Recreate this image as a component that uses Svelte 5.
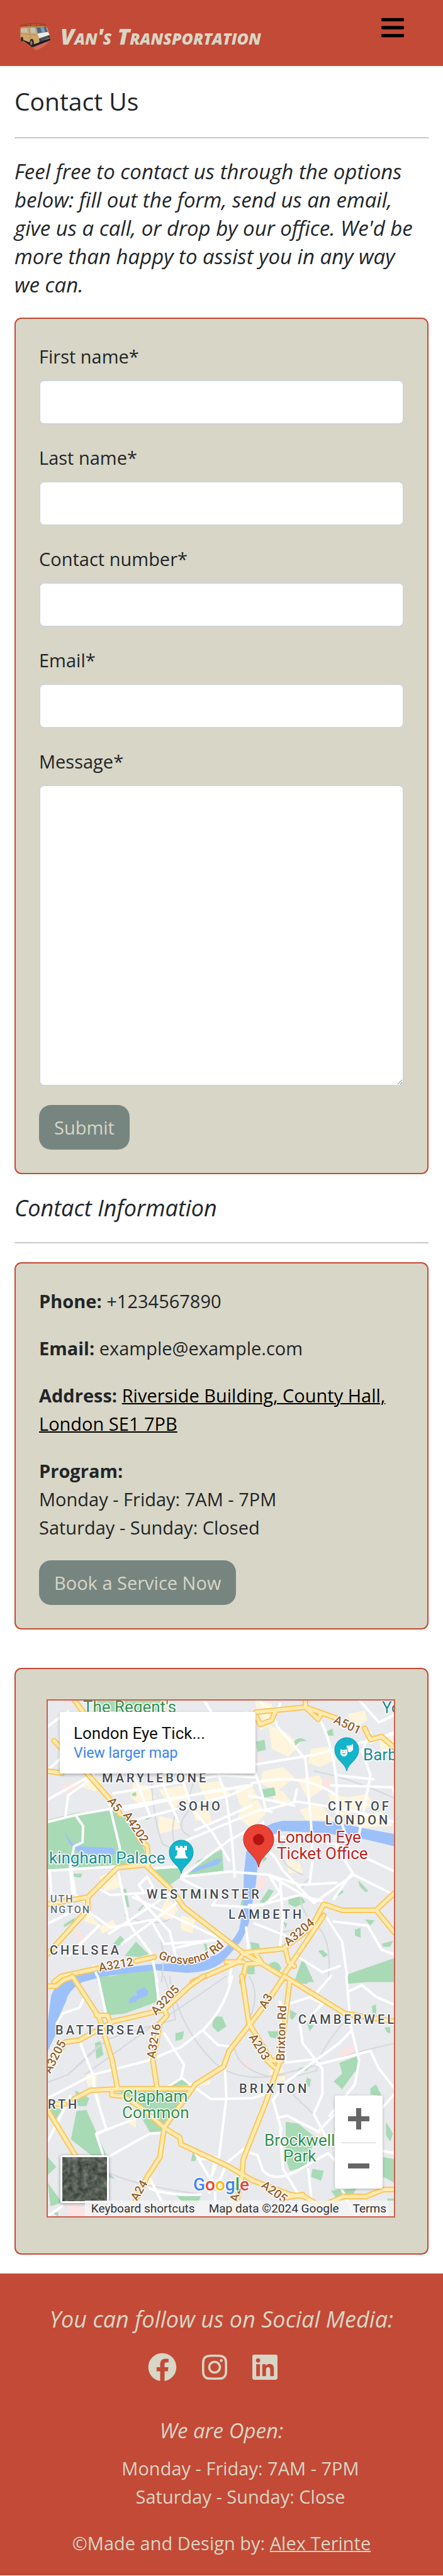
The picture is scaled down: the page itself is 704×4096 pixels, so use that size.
<script>
  const fields = [
    { id: 'first-name', label: 'First name*', type: 'text' },
    { id: 'last-name', label: 'Last name*', type: 'text' },
    { id: 'phone', label: 'Contact number*', type: 'tel' },
    { id: 'email', label: 'Email*', type: 'email' }
  ];

  const socials = [
    {
      name: 'Facebook',
      box: '0 0 512 512',
      width: 46,
      path: 'M504 256C504 119 393 8 256 8S8 119 8 256c0 123.78 90.69 226.38 209.25 245V327.69h-63V256h63v-54.64c0-62.15 37-96.48 93.67-96.48 27.14 0 55.52 4.84 55.52 4.84v61h-31.28c-30.8 0-40.41 19.12-40.41 38.73V256h68.78l-11 71.69h-57.78V501C413.31 482.38 504 379.78 504 256z'
    },
    {
      name: 'Instagram',
      box: '0 0 448 512',
      width: 40,
      path: 'M224.1 141c-63.6 0-114.9 51.3-114.9 114.9s51.3 114.9 114.9 114.9S339 319.5 339 255.9 287.7 141 224.1 141zm0 189.6c-41.1 0-74.7-33.5-74.7-74.7s33.5-74.7 74.7-74.7 74.7 33.5 74.7 74.7-33.6 74.7-74.7 74.7zm146.4-194.3c0 14.9-12 26.8-26.8 26.8-14.9 0-26.8-12-26.8-26.8s12-26.8 26.8-26.8 26.8 12 26.8 26.8zm76.1 27.2c-1.7-35.9-9.9-67.7-36.2-93.9-26.2-26.2-58-34.4-93.9-36.2-37-2.1-147.9-2.1-184.9 0-35.8 1.7-67.6 9.9-93.9 36.1s-34.4 58-36.2 93.9c-2.1 37-2.1 147.9 0 184.9 1.7 35.9 9.9 67.7 36.2 93.9s58 34.4 93.9 36.2c37 2.1 147.9 2.1 184.9 0 35.9-1.7 67.7-9.9 93.9-36.2 26.2-26.2 34.4-58 36.2-93.9 2.1-37 2.1-147.8 0-184.8zM398.8 388c-7.8 19.6-22.9 34.7-42.6 42.6-29.5 11.7-99.5 9-132.1 9s-102.7 2.6-132.1-9c-19.6-7.8-34.7-22.9-42.6-42.6-11.7-29.5-9-99.5-9-132.1s-2.6-102.7 9-132.1c7.8-19.6 22.9-34.7 42.6-42.6 29.5-11.7 99.5-9 132.1-9s102.7-2.6 132.1 9c19.6 7.8 34.7 22.9 42.6 42.6 11.7 29.5 9 99.5 9 132.1s2.7 102.7-9 132.1z'
    },
    {
      name: 'LinkedIn',
      box: '0 0 448 512',
      width: 40,
      path: 'M416 32H31.9C14.3 32 0 46.5 0 64.3v383.4C0 465.5 14.3 480 31.9 480H416c17.6 0 32-14.5 32-32.3V64.3c0-17.8-14.4-32.3-32-32.3zM135.4 416H69V202.2h66.5V416zm-33.2-243c-21.3 0-38.5-17.3-38.5-38.5S80.9 96 102.2 96c21.2 0 38.5 17.3 38.5 38.5 0 21.3-17.2 38.5-38.5 38.5zm282.1 243h-66.4V312c0-24.8-.5-56.7-34.5-56.7-34.6 0-39.9 27-39.9 54.9V416h-66.4V202.2h63.7v29.2h.9c8.9-16.8 30.6-34.5 62.2-34.5 66.5 0 79.8 43.7 79.8 94V416z'
    }
  ];

  // The map is drawn as two tiles, north and south, each with its own grid.
  const tiles = [
    {
      matrix: 'matrix(.449 0 0 .323 -75.5 -59)',
      blocks:
        'M900 170l60 30 20 90-60 40zM950 300l60 40 50 60-40 60-60-40zM1100 420l60-10 30 60-60 40-40-20zM1230 250l60-20 10 50-50 40zM300 560l60 20-20 50-50-20zM470 590l50 10 30 60-50 40-40-40zM560 620l90-20 20 60-60 60zM700 590l80-10 40 70-90 30zM830 620l60-20 20 60-60 40zM860 690l50-20 30 70-50 70-50-50zM680 700l60 30 10 60-60-20zM560 750l60 20 20 40-80 30zM930 530l70-20 40 50-60 70-60-40zM1050 570l80-20 20 60-60 60zM1160 640l70 20 70-20 20 60-130 60zM1060 720l70-30 50 80-100 0zM1240 760l110-30 40 70-120 10zM1340 380l50-20v70l-40 10zM960 620l40 10 30 50-60 10zM350 1050l50-30 30 80-60 20zM590 1150l40 60-30 60-40-30zM270 1200l50 40 40 60-60-30zM600 890l40-20-10 60zM640 1240l50 20-10 70-40-20zM1010 960l50 20 10 50-50 0zM350 1300l50-40 10 40-50 30z',
      pink: 'M230 590l60-10-40 60-40-10zM1145 560l25 10 0 60-35-20zM910 1045l35 15-15 55-25-10zM265 1310l20 10 20 60-20-10-20-40zM905 460l25 0-5 40zM210 180l60 0-20 30z',
      parks:
        'M168 770L270 735 395 720 440 745 500 880 525 990 400 1000 168 1015zM330 180L570 180 555 235 330 235zM905 385l30-10 5 50-30 10zM925 620l45-10 5 40-40 10zM1040 385q15-30 45-5l-25 5-15 20zM1155 335l20-15 5 35-20 0zM465 640l15-8 2 20-14 2zM510 755l20-12 8 12-20 16zM660 1045L700 970 785 915 790 1020 670 1045zM545 1010L640 1005 640 1050 590 1100zM255 1035l35 0-5 20-25-5zM435 1110l10 0 12 90-12 0zM510 1190l-20 30-2-8 30-42zM950 1110l18 10-30 60-20-5zM1020 1155l40-20 20 40-35 25-25-15zM1268 1070l35 50-10 5-22-30zM1190 1130l20-15 5 10-20 20zM400 1380l25-40 20 30-35 25zM440 1440L480 1370 525 1430 490 1445zM225 1285l40-35-5 20-35 30zM1290 1260l35 5-15 25zM1255 1310l20-10 0 50-20-10zM1350 1380l40-15-10 30-25 0zM1125 1415l15-5 20 25-15 12zM885 1370l30 10 5 30-30 10zM340 1568L350 1555 545 1490 550 1568zM1040 1568L1070 1450 1110 1568zM950 1480q30-30 45 20l-10 20zM1225 1568L1230 1530 1395 1450V1568zM720 1380l10 0 5 40-8 0zM870 1490l30-10 0 50-25 0zM1000 1270l15 10-5 25zM855 1160l35 0-5 35-35 0zM925 940l20 20-15 20z',
      water:
        'M1395 840L1300 815 1180 780 1080 775 1000 775Q930 790 895 860L870 930 862 1040 860 1200 845 1310Q820 1380 770 1430 690 1475 550 1480L350 1510 180 1568H260L370 1540 480 1520 550 1510 660 1523Q760 1520 800 1450L850 1370Q885 1290 890 1200L905 1080 915 930Q930 850 1000 825L1150 835 1290 865 1395 900zM230 795q-5 70 45 105l125 8 10 30-60 12-80-28q-45-50-40-127zM680 1015l90-55 15 5-15 25-60 25-30 15z',
      rail: 'M535 590q10 200 40 300l90 60M740 460q-80 130-70 260-60 90 0 130M440 1240q90 60 160 20M550 1300q40 100 20 268M1090 1060q-60 90 10 210 80 60 60 298M900 1280q90 70 160 20M1010 860q-50 120 60 180M1110 530q120 30 280 130M630 700q-40 130 0 230',
      streets:
        'M168 310L240 235M168 525l190-240M168 670L330 545M230 760L240 650 330 560M168 780L270 745 500 690 890 600M268 750l25 50-2 80-30 20-15 110 10 120 60 60M380 660l45 260M470 540l60 210M560 540l70 240M640 550l40 170 70 110 60 140M770 540l30 120 20 210 10 180M400 640l380-90 120 10M440 720l300-90 140-30M450 780l360-130 80-50M660 870l260-150 40 10M690 820l200-120M640 1050l170-180 110-80M520 1010l120-10M640 1050l170-25 140 15 110 50 130-10M870 240q40 160 20 250l30 120 20 110 110-40 180 40 165 60M960 230l20 80 100 160 20 320 5 180-10 110M1130 270q70 200 60 450l40 150M1310 340l-30 90 30 120-40 290M890 500l220-50 280-100M890 590q180-60 300 60M1170 600l220 10 5 30M1050 620l-10 60M880 650l160 50M910 180l50 50M720 180l25 55M168 1020l350-30M175 1020l5 110M250 1000l15 130M415 1010l40 270 80 150 20 138M350 1110l40 30 120-10M480 1140l120 180 20 120M470 1150l300 200M520 1050l-30 40 20 40 30-30-20-50M168 1280l120-80M310 1220l80 80 160-40M385 1330l240-220M430 1380l110-110 100-110M540 1280l40 100 220-20M620 1400l130-40M640 1060l130 90-20 40 130 10M950 1040l40 90-60 60-50 0M950 1040l160 130M1250 1040l-140 140-60-90-50-70-30-70-50-60M1190 900l60 140 145 100M1240 1040l-60 120M890 1200l170-60 80 30M900 1280l110 60M870 1300l10 130M1150 1240l60 130 20 198M1180 1270l120 20 50 120 40 20M1060 1450l80 70 60-30M820 1470l-10 98M990 1060l10 190-10 150M330 1490l20 78M240 1440l110-150M930 780l-10 60 270 50 200 130M1190 550l130 20M1390 340l-80 50M1270 180l70 110 60-40M900 250l160-40M960 280l30-80',
      roads:
        'M262 180L320 290M168 530l50 10M190 380l20 30M300 530L395 680 425 745M490 860L520 900 525 990 415 1005 310 1150 168 1185M310 1150v60L168 1430M520 1000L610 1120 650 1200 860 1425 1000 1405 1100 1300 1145 1185 1210 1215 1330 1215 1395 1130M1330 1215l65 110M1145 1240L1000 1540M860 1425L940 1490 1010 1550M905 1430L925 1475 870 1480 855 1568M860 1430L840 1470 680 1568M1010 1410l10 60 20 20M860 1470L800 1470M480 1465L545 1445M350 1500L215 1540 190 1568M255 1540l10 28M905 240L1080 215 1190 270M1080 180v35l45 60 10-30M905 260l15 40 40-20 15-50M1290 320l20 55 40-15 45 55'
    },
    {
      matrix: 'matrix(.449 0 0 .3127 -75.5 438.3)',
      blocks: 'M300 500l40-10 0 60-30 10zM325 560l15 0 15 100-10 0zM950 480l50-10 10 60-40 10zM450 700l30 20 0 50-25-20zM520 1020l25 40-25 20zM690 540l60-10-10 20-40 10zM1110 790l25-10 0 30z',
      pink: 'M1200 390l50-50 5 60-50 30zM860 420l15 10 15 45-18-2zM240 1160l40-10 30 70h-70z',
      parks:
        'M340 0L550 0 555 130 440 190 375 200zM1225 0H1395V15L1225 40zM1060 10l45-10-20 40-30-5zM755 205l30 0 15 50-30 30-20-30zM620 290l30-10-5 40-25 10zM335 340l20-10 10 70-25 20zM1025 170l25 20-15 30-10-5zM945 280l40 0 0 40-30-10zM1085 240l25 10-15 30zM1315 150l15-5 0 60-12-10zM1360 260l20 0 0 30-12-5zM1200 440l65-35 5 50-60 120-30-40 30-40zM1055 470l50-20-20 30-30 0zM1085 515l15 10-5 40-15-20zM1310 570l20-20 20 60-40-10zM415 585l250 0-30 90-60 120-45 0-70-180zM590 560l55-40 20 35zM270 685l35-5 70 230-45 10-80-90zM265 580l50 40-10 40-30 0zM168 650l50 30-30 70-20-40zM1010 740l45 10 60 70-35 150-55 20-15-60zM1105 980l40 10-10 50-35-20zM1355 920l40 10v120l-40-30zM1365 740l25 60-10 40-15-30zM620 1110l95-5-20 60-50-15zM168 920l30 50-30 40zM168 1050l50 100-40 20zM680 900l20-10-10 50-15 0zM370 980l35 50-30-10zM185 1200l20 0 0 25zM1170 1090l90-10-20 50-50 0zM1370 1130l25 0v95h-20z',
      water: 'M240 0L370 0 290 30Q240 70 232 130L210 200 195 300 168 380V230L180 100Q195 40 240 0zM455 120l15-20 15 0-5-25 30-20 15 25-5 20-30 15-10 15-25 8z',
      rail: 'M580 0q30 120 40 220L490 270 380 320 240 500 168 540M800 0Q640 160 560 230L300 500M600 0q0 60 25 140 40 160 120 280 80 130 260 80M880 0q60 130-50 330-10 130 120 180l130-40 200-90 120-40M1250 180q-130 200-130 300l-80 30M385 1000q80 60 330 110M1035 600l80 110M240 500l110-150',
      streets:
        'M345 0l35 230M550 0l10 120M300 100l-20 60-60 30-20 50M280 330l45 160 10 100 40 190M168 620L330 500 520 430 640 360 720 270Q800 150 820 0M580 290l70 160-10 70-45 40M640 515l105 110 150-5 60-30M720 280l50 70 60 10M795 460l5 160-25 290-30 120M340 800l200-110M375 780l-35 25 30 130M380 920l150-120 50-5M1225 0l15 250 30 180-15 120-90 160M1060 240l10 100 70 130 0 130-30 100 50 140M1005 550l-40 80 30 150M1010 540l190-200 40-60M1000 150l110-50 60-100M990 130l20 310 110-20M1100 110l40 30-40 60M1230 80l50-35 50 60 65 40M1120 450l190-70 30 90 55 100M980 720l35-10 110 80 60-90M990 780l10 200 60 140M870 890l40 20 20 80q40 60 120 0l110-90 40 60M700 930l40 0M690 900l60 150 30-20 20-80 60-70M760 920l-20 180M530 1030l50 140M530 1080q80 40 180 30M760 1100v120M168 840l80-230M168 1220l50-50M1090 980l10 140M1200 1060l60 170M1395 600l-50 80M1395 900l-150-40',
      roads:
        'M255 0L350 210 395 420 415 570M168 50h30l25-30 30-15M340 200h40l10 40M168 470L230 335 280 325 400 230 580 170 670 50 720 0M580 170l10 30-25 40-25 190 15 140M260 625L320 580 430 572 670 572M395 580v25l40 5 65 60 80 100 55 50 5 35 165 110 90 75 130 70 50 10 60 50 80-50h80l60-35 40 0M1005 0L945 130 810 380 790 460 690 550 580 770 565 920 520 1020 450 1225M855 0L880 240 960 430h35M1005 0L1220 190 1395 230M1025 20L990 430 940 640 860 930 855 1020 825 1225M945 430l35 45M168 680L265 910M168 650l60 0M1000 1130l70-20'
    }
  ];

  const districts = [
    ['MARYLEBONE', 86, 130], ['SOHO', 208, 175], ['CITY OF', 445, 175], ['LONDON', 441, 197],
    ['WESTMINSTER', 157, 315], ['LAMBETH', 287, 347], ['CHELSEA', 3, 404], ['BATTERSEA', 12, 531],
    ['CAMBERWEL', 398, 514], ['BRIXTON', 304, 624], ['RTH', 0, 649]
  ];

  const roadNames = [
    ['A501', 453, 35, 25], ['A5', 94, 160, 52], ['A4202', 119, 182, 56], ['A3212', 82, 431, -10],
    ['A3204', 382, 391, -40], ['A3205', 172, 501, -47], ['A3', 346, 491, -60], ['Brixton Rd', 376, 573, -88],
    ['A3216', 170, 570, -80], ['A203', 319, 535, 58], ['A3205', 4, 594, -63], ['A24', 142, 797, -60],
    ['A205', 338, 773, 36], ['A2', 302, 798, -78]
  ];
</script>

{#snippet pin(x, y)}
  <g transform="translate({x} {y})">
    <path d="M0 0C-2-13-19-17-19-34a19 19 0 0 1 38 0C19-17 2-13 0 0z" fill="#12b5cb" stroke="#0e98ab" />
  </g>
{/snippet}

<header>
  <a class="brand" href="#home">
    <svg class="van" viewBox="95 112 165 145" aria-hidden="true">
      <path d="M98 200l85 57q45-14 75-55l-60 20z" fill="#d4766a" opacity=".7" />
      <path d="M103 198l62 44 90-36 0-8-80 26z" fill="#241c1e" />
      <path d="M103 140l55-8 52 2q25 0 32 7l13 47-2 14-80 23-70-27z" fill="#cda66b" />
      <path d="M103 138l75-9 60 5-58 9z" fill="#b08d45" />
      <path d="M104 137V127l78-10 49 8v10M104 129l80 3 47-7M130 124v12M155 121v13M184 118v18M208 122v10" fill="none" stroke="#7b3b33" stroke-width="2" />
      <path d="M105 148l15-3v21l-15-1zM123 145l14-2 1 23-15 0zM155 141l22-1 5 28-27-1z" fill="#bfc5bf" />
      <path d="M185 141l50-4 9 26-52 8z" fill="#4d6785" />
      <path d="M205 139l18-1 7 26-16 2z" fill="#7f9cb8" />
      <path d="M191 171l53-8 9 16-53 17z" fill="#ebebe6" />
      <path d="M199 197l53-18 3 13-53 22z" fill="#29333f" />
      <path d="M205 199l42-13M206 206l42-14" stroke="#8f9aa0" stroke-width="2" />
      <path d="M197 215l59-20 0 8-58 18z" fill="#171b24" />
      <path d="M150 144l4 58M104 170l80 9" stroke="#a8804b" stroke-width="2" />
      <ellipse cx="161" cy="219" rx="11" ry="21" fill="#2d2723" />
      <ellipse cx="159" cy="219" rx="5" ry="11" fill="#8e7c61" />
      <ellipse cx="111" cy="200" rx="6" ry="12" fill="#2d2723" />
    </svg>
    <span>Van's Transportation</span>
  </a>
  <button class="menu" type="button" aria-label="Open menu">
    <svg viewBox="0 0 34 30" aria-hidden="true">
      <path d="M2 3H32M2 15H32M2 27H32" stroke="#000" stroke-width="5" stroke-linecap="round" />
    </svg>
  </button>
</header>

<main>
  <h1>Contact Us</h1>
  <hr />
  <p class="intro">Feel free to contact us through the options below: fill out the form, send us an email, give us a call, or drop by our office. We'd be more than happy to assist you in any way we can.</p>

  <form class="card">
    {#each fields as field}
      <div class="field">
        <label for={field.id}>{field.label}</label>
        <input id={field.id} type={field.type} />
      </div>
    {/each}
    <div class="field">
      <label for="message">Message*</label>
      <textarea id="message"></textarea>
    </div>
    <button class="action" type="button">Submit</button>
  </form>

  <h2>Contact Information</h2>
  <hr />

  <section class="card">
    <p><strong>Phone:</strong> +1234567890</p>
    <p><strong>Email:</strong> example@example.com</p>
    <p><strong>Address:</strong> <a href="#map">Riverside Building, County Hall, London SE1 7PB</a></p>
    <p><strong>Program:</strong><br />Monday - Friday: 7AM - 7PM<br />Saturday - Sunday: Closed</p>
    <a class="action" href="#book">Book a Service Now</a>
  </section>

  <section class="card map-card" id="map">
    <div class="map">
      <svg class="chart" viewBox="0 0 550 820" role="img" aria-label="Map of central London">
        <rect width="550" height="820" fill="#e8eaed" />
        {#each tiles as tile}
          <g transform={tile.matrix} class="tile">
            <path d={tile.blocks} fill="#fef5dc" />
            <path d={tile.pink} fill="#fce4e3" />
            <path d={tile.parks} fill="#a8dab5" />
            <path d={tile.water} fill="#9cc0f9" />
            <path d={tile.rail} class="rail" />
            <path d={tile.streets} class="street" />
            <path d={tile.roads} class="road-edge" />
            <path d={tile.roads} class="road" />
          </g>
        {/each}

        <g class="road-name">
          {#each roadNames as [name, x, y, angle]}
            <text transform="translate({x} {y}) rotate({angle})">{name}</text>
          {/each}
          <path id="embankment" d="M175 410Q240 437 286 384" fill="none" stroke="none" />
          <text><textPath href="#embankment">Grosvenor Rd</textPath></text>
        </g>
        <g class="district">
          {#each districts as [name, x, y]}
            <text {x} {y}>{name}</text>
          {/each}
        </g>
        <g class="district minor">
          <text x="4" y="321">UTH</text>
          <text x="4" y="338">NGTON</text>
        </g>
        <g class="place park">
          <text x="56" y="19">The Regent's</text>
          <text x="119" y="638">Clapham</text>
          <text x="118" y="664">Common</text>
          <text x="344" y="708">Brockwell</text>
          <text x="374" y="733">Park</text>
        </g>
        <g class="place sight">
          <text x="2" y="259">kingham Palace</text>
          <text x="501" y="95">Barb</text>
          <text x="531" y="20">Yo</text>
        </g>
        <g class="place chosen">
          <text x="364" y="226">London Eye</text>
          <text x="364" y="252">Ticket Office</text>
        </g>

        {@render pin(212, 275)}
        <path d="M203 231h4v3h3v-3h4v3h3v-3h4v7h-3l1 8 3 3v2h-20v-2l3-3 1-8h-3z" fill="#fff" />
        {@render pin(475, 112)}
        <path d="M465 77q5 3 11 0v8q-5 8-11 0z" fill="#fff" />
        <path d="M475 71q5 2 10-2v9q-4 6-8 3l0-5-2 0z" fill="#fff" />
        <path d="M468 81h2M472 81h2M468 85q3-2 5 0M479 73h1M482 72h1" stroke="#12b5cb" />
        <path d="M335 265C333 247 311 240 311 221a24 24 0 0 1 48 0C359 240 337 247 335 265z" fill="#ea4335" stroke="#c5221f" />
        <circle cx="335" cy="221" r="9" fill="#b31412" />

        <text class="google" x="231" y="779"><tspan fill="#4285f4">G</tspan><tspan fill="#ea4335">o</tspan><tspan fill="#fbbc04">o</tspan><tspan fill="#4285f4">g</tspan><tspan fill="#34a853">l</tspan><tspan fill="#ea4335">e</tspan></text>
      </svg>

      <div class="place-card">
        <div>London Eye Tick...</div>
        <a href="#larger">View larger map</a>
      </div>

      <div class="zoom">
        <button type="button" aria-label="Zoom in">
          <svg viewBox="0 0 36 36" aria-hidden="true"><path d="M1 18H35M18 1V35" stroke="#666" stroke-width="8" /></svg>
        </button>
        <button type="button" aria-label="Zoom out">
          <svg viewBox="0 0 36 36" aria-hidden="true"><path d="M1 18H35" stroke="#666" stroke-width="8" /></svg>
        </button>
      </div>

      <button class="satellite" type="button" aria-label="Satellite view">
        <svg viewBox="0 0 72 72" aria-hidden="true">
          <filter id="terrain" x="0" y="0" width="100%" height="100%" color-interpolation-filters="sRGB">
            <feTurbulence type="fractalNoise" baseFrequency=".12" numOctaves="4" seed="6" />
            <feColorMatrix values=".4 0 0 0 .13  .4 0 0 0 .16  .4 0 0 0 .13  0 0 0 0 1" />
          </filter>
          <rect width="72" height="72" filter="url(#terrain)" />
        </svg>
      </button>

      <div class="legal">
        <span>Keyboard shortcuts</span>
        <span>Map data ©2024 Google</span>
        <span>Terms</span>
      </div>
    </div>
  </section>
</main>

<footer>
  <h3>You can follow us on Social Media:</h3>
  <ul class="socials">
    {#each socials as item}
      <li>
        <a href="#{item.name}" aria-label={item.name}>
          <svg viewBox={item.box} width={item.width} height="46" aria-hidden="true"><path d={item.path} fill="currentColor" /></svg>
        </a>
      </li>
    {/each}
  </ul>
  <h4>We are Open:</h4>
  <ul class="hours">
    <li>Monday - Friday: 7AM - 7PM</li>
    <li>Saturday - Sunday: Close</li>
  </ul>
  <p>©Made and Design by: <a href="#author">Alex Terinte</a></p>
</footer>

<style>
  :global(body) {
    margin: 0;
    background: #fff;
    color: #212529;
    font-family: "Open Sans", "Noto Sans", sans-serif;
    font-size: 29px;
    line-height: 45px;
  }

  :global(*) {
    box-sizing: border-box;
  }

  h1, h2, h3, h4, p, ul {
    margin: 0;
    padding: 0;
    font-weight: 400;
  }

  ul {
    list-style: none;
  }

  header {
    display: flex;
    justify-content: space-between;
    align-items: flex-start;
    height: 105px;
    padding: 28px 62px 0 30px;
    background: #c34a36;
  }

  .brand {
    display: flex;
    align-items: center;
    gap: 15px;
    margin-top: 7px;
    color: #d8d6c6;
    font-size: 36px;
    font-style: italic;
    font-variant: small-caps;
    font-weight: 800;
    text-decoration: none;
    white-space: nowrap;
  }

  .van {
    width: 51px;
    height: 45px;
  }

  .menu {
    padding: 0;
    border: 0;
    background: none;
  }

  .menu svg {
    display: block;
    width: 36px;
    height: 32px;
  }

  main {
    padding: 29px 23px 30px;
  }

  h1 {
    font-size: 39px;
    line-height: 54px;
  }

  hr {
    height: 2px;
    margin: 30px 0;
    border: 0;
    background: #c8c9ca;
  }

  .intro {
    margin-bottom: 30px;
    padding-right: 12px;
    font-size: 33px;
    font-style: italic;
  }

  .card {
    padding: 37px;
    border: 2px solid #c34a36;
    border-radius: 11px;
    background: #d8d6c6;
  }

  .field {
    display: flex;
    flex-direction: column;
    gap: 15px;
    margin-bottom: 30px;
  }

  input, textarea {
    width: 100%;
    height: 71px;
    padding: 11px 22px;
    border: 2px solid #ced4da;
    border-radius: 8px;
    background: #fff;
    font: inherit;
  }

  textarea {
    display: block;
    height: 479px;
  }

  .action {
    display: inline-block;
    height: 71px;
    padding: 13px 24px;
    border: 0;
    border-radius: 19px;
    background: #778581;
    color: #d8d6c6;
    font: inherit;
    text-decoration: none;
    vertical-align: top;
  }

  h2 {
    margin-top: 30px;
    font-size: 36px;
    font-style: italic;
    line-height: 48px;
  }

  .card p {
    margin-bottom: 30px;
  }

  .card p a {
    color: #000;
    text-decoration-thickness: 2px;
  }

  .map-card {
    margin-top: 61px;
    padding: 48px 51px 57px 49px;
  }

  .map {
    position: relative;
    overflow: hidden;
    border: 2px solid #cb5f4d;
    font-family: Roboto, sans-serif;
  }

  .chart {
    display: block;
    width: 100%;
    height: auto;
  }

  .tile path {
    vector-effect: non-scaling-stroke;
    stroke-linejoin: round;
    stroke-linecap: round;
  }

  .rail, .street, .road, .road-edge {
    fill: none;
  }

  .rail {
    stroke: #d5d8db;
    stroke-width: 2px;
  }

  .street {
    stroke: #fff;
    stroke-width: 4px;
  }

  .road-edge {
    stroke: #fbc65a;
    stroke-width: 9px;
  }

  .road {
    stroke: #ffebb0;
    stroke-width: 5px;
  }

  .chart text {
    paint-order: stroke;
    stroke: #fff;
    stroke-width: 3px;
    stroke-linejoin: round;
  }

  .road-name {
    fill: #94602c;
    font-size: 19px;
    font-weight: 500;
  }

  .district {
    fill: #474c52;
    font-size: 20px;
    font-weight: 500;
    letter-spacing: 4px;
  }

  .minor {
    fill: #696e74;
    font-size: 16px;
    letter-spacing: 2px;
  }

  .place {
    font-size: 26px;
  }

  .park {
    fill: #34904f;
  }

  .sight {
    fill: #1a8b96;
  }

  .chosen {
    fill: #bd2320;
  }

  .google {
    font-size: 28px;
    font-weight: 500;
  }

  .place-card {
    position: absolute;
    top: 18px;
    left: 19px;
    width: 311px;
    height: 98px;
    padding: 18px 22px;
    border-radius: 3px;
    background: #fff;
    box-shadow: 0 2px 5px #0004;
    color: #111;
    font-size: 26px;
    line-height: 32px;
  }

  .place-card a {
    display: block;
    color: #3b82f0;
    font-size: 23px;
    text-decoration: none;
  }

  .zoom {
    position: absolute;
    right: 18px;
    bottom: 44px;
    width: 76px;
    border-radius: 3px;
    background: #fff;
    box-shadow: 0 1px 4px #0004;
  }

  .zoom button {
    display: grid;
    place-items: center;
    width: 56px;
    height: 74px;
    margin: 0 10px;
    padding: 0;
    border: 0;
    background: none;
  }

  .zoom button + button {
    border-top: 2px solid #e6e6e6;
  }

  .zoom svg {
    width: 36px;
    height: 36px;
  }

  .satellite {
    position: absolute;
    bottom: 21px;
    left: 20px;
    width: 77px;
    height: 76px;
    padding: 0;
    border: 3px solid #fff;
    border-radius: 3px;
    box-shadow: 0 1px 5px #0006;
    overflow: hidden;
  }

  .satellite svg {
    display: block;
    width: 100%;
    height: 100%;
  }

  .legal {
    position: absolute;
    right: 0;
    bottom: 0;
    display: flex;
    gap: 22px;
    padding: 0 12px 0 10px;
    background: #f5f5f5d0;
    color: #333;
    font-size: 19px;
    line-height: 25px;
    white-space: nowrap;
  }

  footer {
    padding: 49px 0 29px;
    background: #c34a36;
    color: #d8d6c6;
    text-align: center;
  }

  footer a {
    color: inherit;
    text-decoration-thickness: 2px;
  }

  h3 {
    font-size: 36px;
    font-style: italic;
    line-height: 48px;
  }

  .socials {
    display: flex;
    justify-content: center;
    gap: 40px;
    margin: 29px 0 55px;
    padding-right: 28px;
  }

  .socials svg {
    display: block;
  }

  h4 {
    font-size: 33px;
    font-style: italic;
  }

  .hours {
    margin: 15px 0 29px;
    padding-left: 60px;
  }
</style>
